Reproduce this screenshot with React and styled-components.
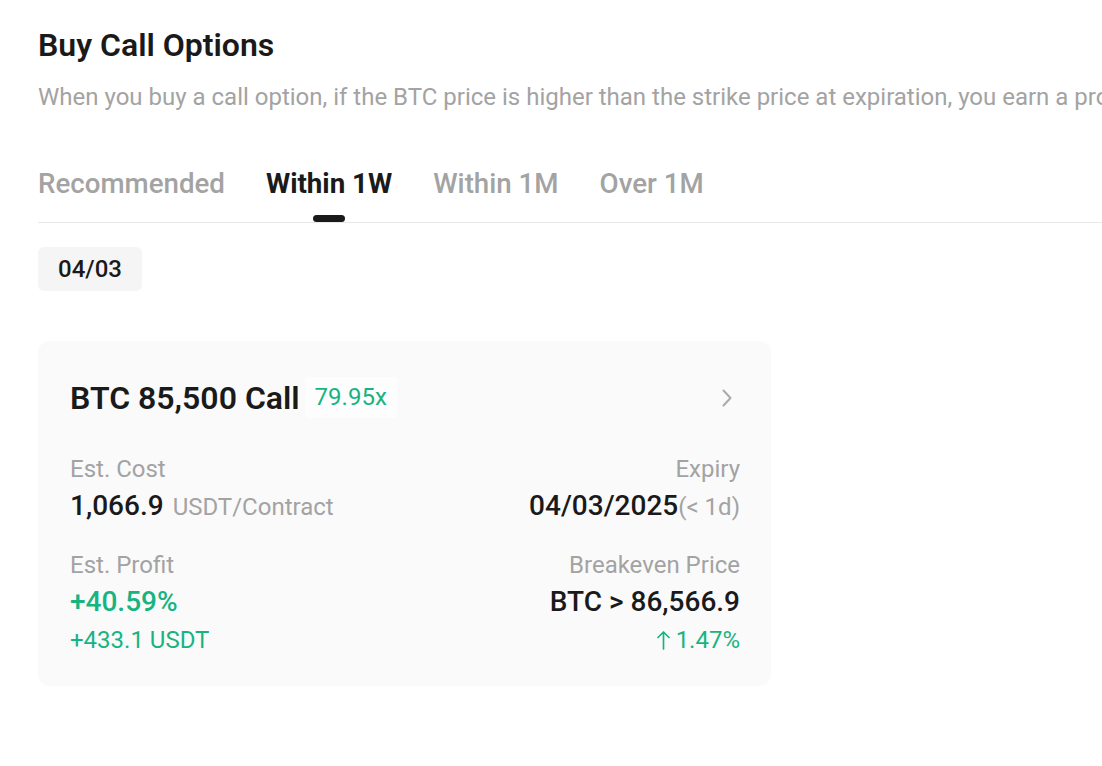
import React from 'react'
import styled, { createGlobalStyle } from 'styled-components'

const GlobalStyle = createGlobalStyle`
  html, body {
    margin: 0;
    padding: 0;
    background: #ffffff;
    overflow: hidden;
  }
  body {
    font-family: Roboto, 'Noto Sans', 'Liberation Sans', sans-serif;
    color: #1a1a1a;
  }
`

const GREEN = '#17b482'
const GREY = '#a3a3a3'

const Page = styled.div`
  padding: 25px 0 0 38px;
  width: 1064px;
`

const Title = styled.h1`
  margin: 0;
  font-size: 32px;
  line-height: 40px;
  font-weight: 600;
  color: #1a1a1a;
`

const Subtitle = styled.p`
  margin: 16px 0 0;
  font-size: 24px;
  line-height: 32px;
  color: ${GREY};
  white-space: nowrap;
`

const Tabs = styled.div`
  display: flex;
  gap: 41px;
  margin-top: 53px;
  border-bottom: 1px solid #e8e8e8;
`

const Tab = styled.div`
  position: relative;
  font-size: 27.7px;
  line-height: 36px;
  padding-bottom: 20px;
  font-weight: ${p => (p.$active ? 700 : 500)};
  color: ${p => (p.$active ? '#1a1a1a' : GREY)};

  &::after {
    content: '';
    display: ${p => (p.$active ? 'block' : 'none')};
    position: absolute;
    left: 50%;
    bottom: 0;
    width: 32px;
    height: 7px;
    margin-left: -16px;
    border-radius: 4px;
    background: #1a1a1a;
  }
`

const Chip = styled.div`
  display: inline-flex;
  align-items: center;
  justify-content: center;
  margin-top: 24px;
  width: 104px;
  height: 44px;
  border-radius: 6px;
  background: #f5f5f5;
  font-size: 24px;
  font-weight: 500;
  color: #1a1a1a;
`

const Card = styled.div`
  margin-top: 50px;
  width: 733px;
  box-sizing: border-box;
  padding: 36px 31px 30px 32px;
  border-radius: 12px;
  background: #fafafa;
`

const CardHead = styled.div`
  display: flex;
  align-items: center;
  gap: 5px;
`

const CardTitle = styled.div`
  font-size: 32px;
  line-height: 40px;
  font-weight: 600;
  color: #1a1a1a;
`

const Badge = styled.span`
  padding: 6px 10px 7px;
  line-height: 28px;
  border-radius: 4px;
  background: #fdfdfd;
  font-size: 24px;
  color: ${GREEN};
`

const Chevron = styled.svg`
  margin-left: auto;
  margin-right: 7px;
`

const Grid = styled.div`
  display: grid;
  grid-template-columns: 1fr 1fr;
  row-gap: 24px;
  margin-top: 35px;
`

const Cell = styled.div`
  display: flex;
  flex-direction: column;
  align-items: ${p => (p.$right ? 'flex-end' : 'flex-start')};
`

const Label = styled.div`
  font-size: 24px;
  line-height: 32px;
  color: ${GREY};
`

const Value = styled.div`
  margin-top: 3px;
  font-size: 28px;
  line-height: 36px;
  font-weight: 500;
  color: ${p => (p.$green ? GREEN : '#1a1a1a')};
  white-space: nowrap;
`

const Unit = styled.span`
  font-size: 24px;
  font-weight: 400;
  color: ${GREY};
  margin-left: ${p => (p.$tight ? '0' : '9px')};
`

const Sub = styled.div`
  margin-top: 4px;
  font-size: 24px;
  line-height: 32px;
  color: ${GREEN};
  display: flex;
  align-items: center;
  gap: 6px;
`

const tabs = ['Recommended', 'Within 1W', 'Within 1M', 'Over 1M']

export default function App() {
  return (
    <Page>
      <GlobalStyle />
      <Title>Buy Call Options</Title>
      <Subtitle>
        When you buy a call option, if the BTC price is higher than the strike price at expiration, you earn a profit.
      </Subtitle>
      <Tabs>
        {tabs.map(t => (
          <Tab key={t} $active={t === 'Within 1W'}>{t}</Tab>
        ))}
      </Tabs>
      <Chip>04/03</Chip>
      <Card>
        <CardHead>
          <CardTitle>BTC 85,500 Call</CardTitle>
          <Badge>79.95x</Badge>
          <Chevron width="12" height="20" viewBox="0 0 12 20" fill="none">
            <path d="M2.5 2.5l7 7.5-7 7.5" stroke="#aaaaaa" strokeWidth="2" strokeLinecap="round" strokeLinejoin="round" />
          </Chevron>
        </CardHead>
        <Grid>
          <Cell>
            <Label>Est. Cost</Label>
            <Value>1,066.9<Unit>USDT/Contract</Unit></Value>
          </Cell>
          <Cell $right>
            <Label>Expiry</Label>
            <Value>04/03/2025<Unit $tight>(&lt; 1d)</Unit></Value>
          </Cell>
          <Cell>
            <Label>Est. Profit</Label>
            <Value $green>+40.59%</Value>
            <Sub>+433.1 USDT</Sub>
          </Cell>
          <Cell $right>
            <Label>Breakeven Price</Label>
            <Value>BTC &gt; 86,566.9</Value>
            <Sub>
              <svg width="13" height="20" viewBox="0 0 13 20" fill="none">
                <path d="M6.5 19V2M1 7.5L6.5 2 12 7.5" stroke={GREEN} strokeWidth="1.7" strokeLinecap="round" strokeLinejoin="round" />
              </svg>
              1.47%
            </Sub>
          </Cell>
        </Grid>
      </Card>
    </Page>
  )
}
